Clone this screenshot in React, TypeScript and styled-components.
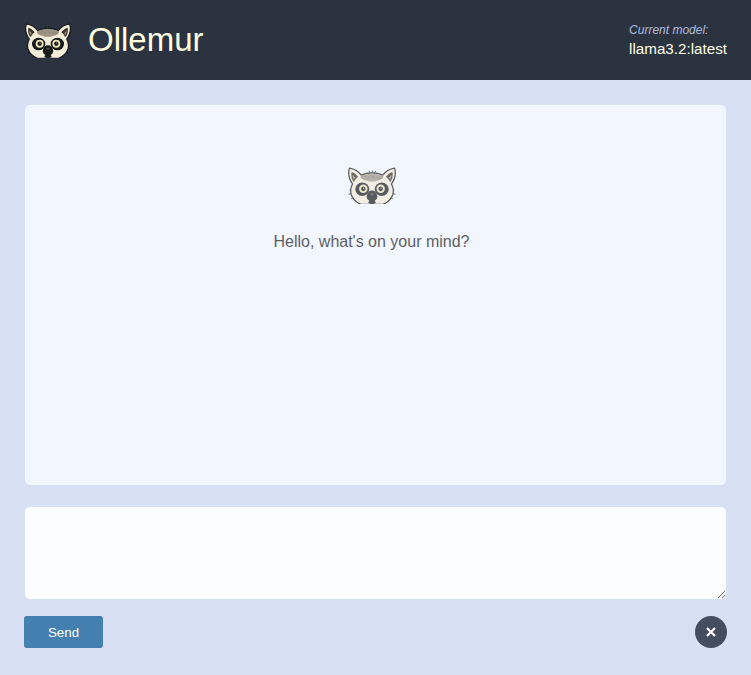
import React from "react";
import styled, { createGlobalStyle } from "styled-components";

const GlobalStyle = createGlobalStyle`
  * { box-sizing: border-box; }
  body {
    margin: 0;
    background: #d8e0f3;
    font-family: "Liberation Sans", Arial, sans-serif;
  }
`;

const Page = styled.div`
  height: 100vh;
  display: flex;
  flex-direction: column;
  overflow: hidden;
`;

const Header = styled.header`
  height: 80px;
  flex: none;
  padding: 0 24px;
  display: flex;
  align-items: center;
  background: #2b3240;
`;

const Title = styled.h1`
  margin: 0 0 0 16px;
  font-size: 33px;
  line-height: 40px;
  font-weight: 400;
  color: #ffffe0;
`;

const Model = styled.div`
  margin-left: auto;
  display: flex;
  flex-direction: column;
  gap: 2px;
  padding-bottom: 1px;
`;

const ModelLabel = styled.span`
  font-size: 12px;
  line-height: 16px;
  font-style: italic;
  color: #b0bcdf;
`;

const ModelName = styled.span`
  font-size: 15.2px;
  line-height: 18px;
  color: #ffffe8;
`;

const Main = styled.main`
  flex: 1;
  padding: 25px 25px 0;
  display: flex;
  flex-direction: column;
`;

const Conversation = styled.section`
  height: 380px;
  border-radius: 5px;
  background: #f1f6ff;
`;

const Greeting = styled.div`
  padding: 62px 8px 0 0;
  display: flex;
  flex-direction: column;
  align-items: center;
  gap: 28px;
  opacity: 0.7;
`;

const GreetingText = styled.p`
  margin: 0;
  font-size: 16px;
  line-height: 20px;
  color: #1a1a1a;
`;

const Prompt = styled.textarea`
  display: block;
  width: 100%;
  height: 92px;
  margin: 22px 0 17px;
  padding: 12px;
  border: 0;
  border-radius: 5px;
  outline: 0;
  resize: vertical;
  background: #fbfdff;
  font: 16px "Liberation Sans", Arial, sans-serif;
`;

const Actions = styled.div`
  margin: 0 -1px;
  display: flex;
  justify-content: space-between;
`;

const SendButton = styled.button`
  width: 79px;
  height: 32px;
  padding: 0;
  border: 0;
  border-radius: 3px;
  background: #4380af;
  color: #fff;
  font: 13.333px "Liberation Sans", Arial, sans-serif;
`;

const ClearButton = styled.button`
  width: 32px;
  height: 32px;
  padding: 0 0 1px;
  border: 0;
  border-radius: 50%;
  display: flex;
  align-items: center;
  justify-content: center;
  background: #454d60;
`;

const LemurSvg = styled.svg`
  display: block;
  flex: none;
`;

function Lemur({ width, height }: { width: number; height: number }) {
  return (
    <LemurSvg width={width} height={height} viewBox="18 28 144 105" preserveAspectRatio="none">
      <g stroke="#17191b" strokeLinejoin="round" strokeLinecap="round">
        <path d="M29 94l-3-1M29 104l-5 1M36 115l-5 3M151 94l3-1M151 104l5 1M144 115l5 3M84 45l-2-5M92 45v-6M98 45l2-4" strokeWidth="2.5" />
        <path d="M34 76C24 63 21 45 25 31C39 33 51 40 59 51C77 43 103 43 121 51C129 40 141 33 155 31C159 45 156 63 146 76C151 85 153 95 150 106C146 118 136 128 122 134H58C44 128 34 118 30 106C27 95 29 85 34 76Z" fill="#f3ecd8" strokeWidth="3.5" />
      </g>
      <path d="M31 42C39 44 45 49 50 56C43 61 40 66 38 71C31 63 29 51 31 42ZM149 42C141 44 135 49 130 56C137 61 140 66 142 71C149 63 151 51 149 42Z" fill="#39322c" />
      <path d="M34 50l7 8-3 6q-4-6-4-14ZM146 50l-7 8 3 6q4-6 4-14Z" fill="#a49584" />
      <path d="M57 53C76 45 104 45 123 53C124 60 118 65 107 66Q90 73 73 66C62 65 56 60 57 53Z" fill="#9d9486" />
      <path d="M69 56l4-2M79 58l3-3M91 55l4 2M103 56l4 2M111 60l4-2" stroke="#665f55" strokeWidth="2" />
      <g fill="#17191b">
        <ellipse cx="62" cy="91" rx="20" ry="19" />
        <ellipse cx="118" cy="91" rx="20" ry="19" />
      </g>
      <g fill="#f0e6bd">
        <circle cx="65" cy="90" r="12" />
        <circle cx="115" cy="90" r="12" />
      </g>
      <g fill="#17191b">
        <circle cx="65" cy="90" r="6.5" />
        <circle cx="115" cy="90" r="6.5" />
        <path d="M75 109C77 101 82 95 90 95S103 101 105 109C107 118 101 122 98 123L101 130Q90 136 79 130L82 123C79 122 73 118 75 109Z" />
      </g>
      <path d="M84 104q6-5 12 0l-3 5h-6z" fill="#4a4640" />
      <circle cx="66" cy="88" r="1.5" fill="#f5efdc" />
      <circle cx="116" cy="88" r="1.5" fill="#f5efdc" />
    </LemurSvg>
  );
}

export default function App() {
  return (
    <>
      <GlobalStyle />
      <Page>
        <Header>
          <Lemur width={48} height={35} />
          <Title>Ollemur</Title>
          <Model>
            <ModelLabel>Current model:</ModelLabel>
            <ModelName>llama3.2:latest</ModelName>
          </Model>
        </Header>
        <Main>
          <Conversation>
            <Greeting>
              <Lemur width={50} height={37} />
              <GreetingText>Hello, what's on your mind?</GreetingText>
            </Greeting>
          </Conversation>
          <Prompt aria-label="Message" />
          <Actions>
            <SendButton>Send</SendButton>
            <ClearButton aria-label="Clear conversation">
              <svg width="10" height="10" viewBox="0 0 10 10">
                <path d="M1 1l8 8M9 1L1 9" stroke="#fff" strokeWidth="2.2" />
              </svg>
            </ClearButton>
          </Actions>
        </Main>
      </Page>
    </>
  );
}
